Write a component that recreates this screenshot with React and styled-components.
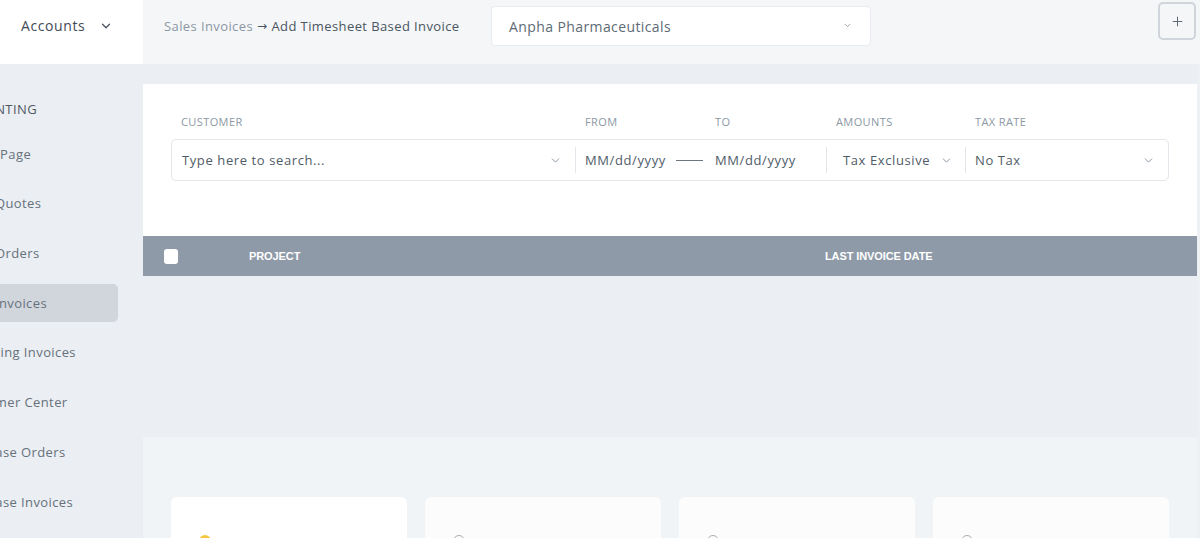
import React from "react";
import styled, { createGlobalStyle } from "styled-components";
import { ChevronDown, Plus } from "lucide-react";

const GlobalStyle = createGlobalStyle`
  * { box-sizing: border-box; }
  body {
    margin: 0;
    font-family: "Open Sans", "DejaVu Sans", sans-serif;
    letter-spacing: 0.4px;
    background: #ebeef2;
    color: #4a5561;
  }
`;

const sideItems = [
  { label: "Home Page" },
  { label: "Sales Quotes" },
  { label: "Sales Orders" },
  { label: "Sales Invoices", active: true },
  { label: "Recurring Invoices" },
  { label: "Customer Center" },
  { label: "Purchase Orders" },
  { label: "Purchase Invoices" },
];

const cards = [{ color: "#f5c842", filled: true }, {}, {}, {}];

const App = () => {
  return (
    <>
      <GlobalStyle />
      <Page>
        <Brand>
          Accounts
          <ChevronDown size={14} strokeWidth={2.2} />
        </Brand>
        <TopBar>
          <Crumbs>
            <span className="muted">Sales Invoices</span>
            <span className="arrow">→</span>
            <span>Add Timesheet Based Invoice</span>
          </Crumbs>
          <CompanySelect>
            <span>Anpha Pharmaceuticals</span>
            <ChevronDown size={9} strokeWidth={2} />
          </CompanySelect>
          <AddButton>
            <Plus size={15} strokeWidth={1.6} />
          </AddButton>
        </TopBar>

        <Sidebar>
          <SideList>
            <SideTitle>Accounting</SideTitle>
            {sideItems.map((item) => (
              <SideItem key={item.label} active={item.active}>
                {item.label}
              </SideItem>
            ))}
          </SideList>
        </Sidebar>

        <Main>
          <FilterPanel>
            <FilterGrid>
              <Label>Customer</Label>
              <Label>From</Label>
              <Label>To</Label>
              <Label>Amounts</Label>
              <Label>Tax Rate</Label>
              <FilterBox>
                <Field>
                  <span>Type here to search...</span>
                  <ChevronDown size={13} strokeWidth={1.6} />
                </Field>
                <Field divider>
                  <span>MM/dd/yyyy</span>
                  <Dash />
                </Field>
                <Field>
                  <span>MM/dd/yyyy</span>
                </Field>
                <Field divider inline>
                  <span>Tax Exclusive</span>
                  <ChevronDown size={13} strokeWidth={1.6} />
                </Field>
                <Field divider>
                  <span>No Tax</span>
                  <ChevronDown size={13} strokeWidth={1.6} />
                </Field>
              </FilterBox>
            </FilterGrid>
          </FilterPanel>

          <TableHead>
            <Check />
            <HeadCell width="576px">Project</HeadCell>
            <HeadCell>Last Invoice Date</HeadCell>
          </TableHead>
          <EmptyRows />

          <Summary>
            {cards.map((c, i) => (
              <Card key={i} first={i === 0}>
                <Dot color={c.color} filled={c.filled} />
              </Card>
            ))}
          </Summary>
        </Main>
      </Page>
    </>
  );
};

export default App;

const Page = styled.div`
  display: grid;
  grid-template-columns: 143px 1fr;
  grid-template-rows: 64px 1fr;
  height: 538px;
  overflow: hidden;
`;

const Brand = styled.div`
  background: #fff;
  display: flex;
  align-items: center;
  gap: 14px;
  padding-left: 21px;
  padding-bottom: 13px;
  font-size: 14px;
  letter-spacing: 0.6px;
  color: #3f4a55;
  svg {
    color: #4a5561;
  }
`;

const TopBar = styled.div`
  background: #f5f6f8;
  display: flex;
  align-items: flex-start;
  padding: 0 4px 0 21px;
`;

const Crumbs = styled.div`
  display: flex;
  align-items: center;
  gap: 4px;
  width: 306px;
  height: 51px;
  font-size: 13px;
  color: #4a5561;
  white-space: nowrap;
  .muted {
    color: #8b97a3;
  }
  .arrow {
    font-size: 12px;
    color: #4a5561;
  }
`;

const CompanySelect = styled.div`
  margin: 6px 0 0 21px;
  width: 380px;
  height: 40px;
  background: #fff;
  border: 1px solid #e8ebef;
  border-radius: 4px;
  display: flex;
  align-items: center;
  justify-content: space-between;
  padding: 0 18px 0 17px;
  font-size: 14px;
  color: #5e6a75;
  svg {
    color: #7b8794;
    margin-top: -2px;
  }
`;

const AddButton = styled.button`
  margin: 2px 0 0 auto;
  width: 38px;
  height: 38px;
  background: #f5f6f8;
  border: 2px solid #cfd5db;
  border-radius: 5px;
  display: flex;
  align-items: center;
  justify-content: center;
  color: #5e6a78;
  padding: 0;
`;

const Sidebar = styled.aside`
  background: #ebeef2;
  overflow: hidden;
`;

const SideList = styled.div`
  margin-left: -58px;
  width: 176px;
  padding-top: 37px;
  display: flex;
  flex-direction: column;
  gap: 11.7px;
`;

const SideTitle = styled.div`
  padding-left: 7px;
  font-size: 13px;
  text-transform: uppercase;
  color: #4f5a65;
  height: 16px;
  line-height: 16px;
  margin-bottom: 6px;
`;

const SideItem = styled.div`
  height: 38px;
  display: flex;
  align-items: center;
  padding-left: 16px;
  border-radius: 5px;
  font-size: 13px;
  white-space: nowrap;
  color: #66717c;
  background: ${(p) => (p.active ? "#d0d6dc" : "transparent")};
`;

const Main = styled.main`
  display: flex;
  flex-direction: column;
  padding-top: 20px;
  border-right: 3px solid #eef1f4;
`;

const FilterPanel = styled.section`
  background: #fff;
  height: 152px;
  padding: 31px 28px 0;
`;

const FilterGrid = styled.div`
  display: grid;
  grid-template-columns: 404px 130px 121px 139px 1fr;
  row-gap: 10px;
`;

const Label = styled.div`
  font-size: 11px;
  line-height: 14px;
  text-transform: uppercase;
  color: #8c98a4;
  padding-left: 10px;
`;

const FilterBox = styled.div`
  grid-column: 1 / -1;
  display: grid;
  grid-template-columns: 403px 130px 121px 139px 1fr;
  height: 42px;
  border: 1px solid #e3e6ea;
  border-radius: 5px;
  align-items: center;
`;

const Field = styled.div`
  height: 26px;
  display: flex;
  align-items: center;
  justify-content: ${(p) => (p.inline ? "flex-start" : "space-between")};
  gap: ${(p) => (p.inline ? "10px" : "8px")};
  padding: 0 13px 0 ${(p) => (p.inline ? "16px" : p.divider ? "9px" : "10px")};
  font-size: 13px;
  letter-spacing: 0.6px;
  color: #505c68;
  border-left: ${(p) => (p.divider ? "1px solid #e3e6ea" : "none")};
  white-space: nowrap;
  svg {
    color: #7b8794;
    flex-shrink: 0;
  }
`;

const Dash = styled.span`
  width: 27px;
  height: 1px;
  background: #6b7681;
  margin-right: -11px;
`;

const TableHead = styled.div`
  height: 40px;
  background: #8e9aa7;
  display: flex;
  align-items: center;
  padding-left: 21px;
`;

const Check = styled.span`
  width: 14px;
  height: 15px;
  background: #fff;
  border-radius: 3px;
  margin-right: 71px;
`;

const HeadCell = styled.div`
  width: ${(p) => p.width || "auto"};
  font-family: "Liberation Sans", Arial, sans-serif;
  font-size: 11px;
  font-weight: 700;
  letter-spacing: -0.1px;
  text-transform: uppercase;
  color: #fff;
`;

const EmptyRows = styled.div`
  height: 161px;
  background: #ebeef2;
`;

const Summary = styled.section`
  flex: 1;
  background: #f0f4f7;
  padding: 60px 28px 0;
  display: grid;
  grid-template-columns: repeat(4, 1fr);
  gap: 18px;
`;

const Card = styled.div`
  background: ${(p) => (p.first ? "#fff" : "#fcfcfc")};
  border-radius: 6px 6px 0 0;
  padding: 38px 0 0 28px;
`;

const Dot = styled.span`
  display: block;
  width: 12px;
  height: 12px;
  border-radius: 50%;
  background: ${(p) => (p.filled ? p.color : "transparent")};
  border: ${(p) => (p.filled ? "none" : "1.5px solid #a8b0b8")};
`;
